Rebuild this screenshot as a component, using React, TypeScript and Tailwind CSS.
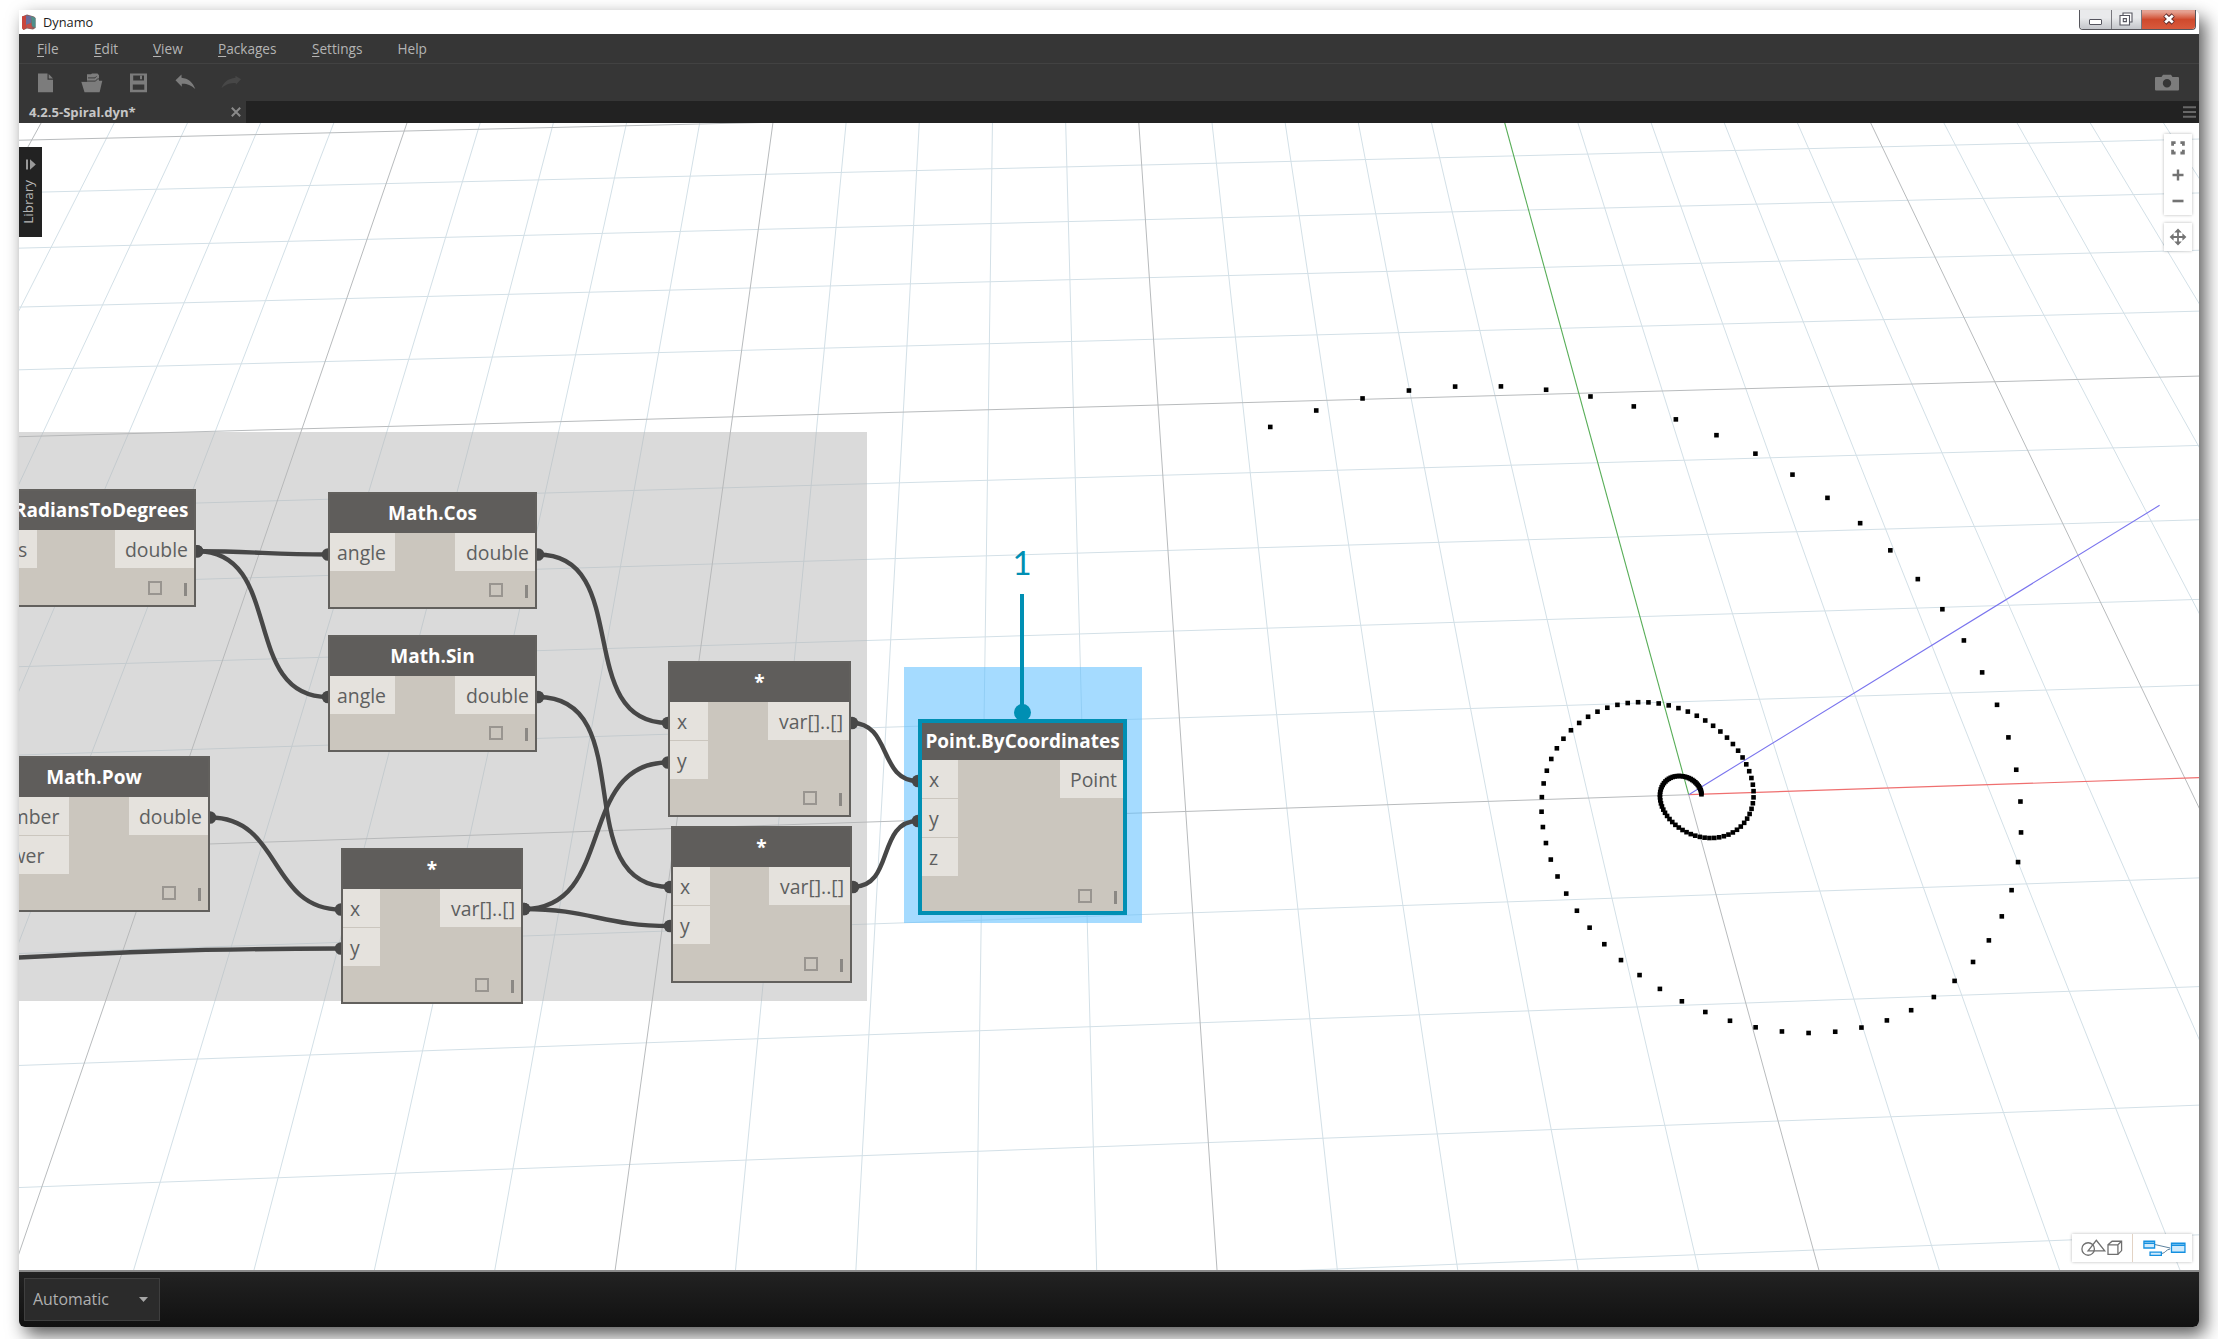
import React from "react";

/* ---------- 3D background: ground plane seen in perspective ---------- */

type Pt = [number, number];

// Projects a point of the ground plane to canvas pixels.
const project = (x: number, y: number): Pt => {
  const w = 1 + 0.001358 * x + 0.03917 * y;
  return [
    (1688.7 + 102.2 * x + 39.86 * y) / w,
    (794.7 - 2.249 * x - 64.87 * y) / w,
  ];
};

const segment = (a: Pt, b: Pt) =>
  `M${a[0].toFixed(1)} ${a[1].toFixed(1)}L${b[0].toFixed(1)} ${b[1].toFixed(1)}`;

const range = (from: number, to: number) =>
  Array.from({ length: to - from + 1 }, (_, i) => from + i);

const columns = range(-28, 20);
const rows = range(-5, 13);

const minorPath =
  columns.filter((k) => k % 5 !== 0).map((k) => segment(project(k, -6), project(k, 14))).join("") +
  rows.filter((k) => k % 5 !== 0).map((k) => segment(project(-30, k), project(20, k))).join("");

const majorPath =
  columns.filter((k) => k % 5 === 0 && k !== 0).map((k) => segment(project(k, -6), project(k, 14))).join("") +
  rows.filter((k) => k % 5 === 0 && k !== 0).map((k) => segment(project(-30, k), project(20, k))).join("") +
  segment(project(-30, 0), project(0, 0)) +
  segment(project(0, -6), project(0, 0));

// Logarithmic spiral sampled at a constant angular step.
const spiral = range(0, 148).map((i) => {
  const t = i * 0.10008;
  const r = 0.1275 * Math.exp(0.2593 * t);
  return project(r * Math.cos(t), r * Math.sin(t));
});

function Background() {
  return (
    <svg className="absolute inset-0 size-full" viewBox="19 123 2180 1147" fill="none">
      <path d={minorPath} stroke="#d3e0e7" strokeWidth="1" />
      <path d={majorPath} stroke="#b8bbbd" strokeWidth="1" />
      <path d={segment(project(0, 0), project(0, 14))} stroke="#57ad57" strokeWidth="1.1" />
      <path d={segment(project(0, 0), project(20, 0))} stroke="#ef6f6f" strokeWidth="1.2" />
      <path d="M1688.7 794.7L2159.6 505.3" stroke="#7a74ee" strokeWidth="1.1" />
      {spiral.map(([x, y], i) => (
        <rect key={i} x={x - 2.3} y={y - 2.3} width="4.6" height="4.6" fill="#000" />
      ))}
    </svg>
  );
}

/* ---------- Wires ---------- */

const wires: [number, number, number, number][] = [
  [197, 551.3, 328, 554.5],
  [197, 551.3, 328, 697],
  [538, 554.5, 668, 723],
  [538, 697, 670, 887],
  [524, 909, 668, 762.5],
  [524, 909, 670, 926],
  [210, 817.5, 341, 909.5],
  [852, 723, 918, 781],
  [853, 887, 918, 821],
];

function Wires() {
  return (
    <svg className="absolute inset-0 size-full" viewBox="19 123 2180 1147" fill="none">
      <g stroke="#474747" strokeWidth="4.4">
        {wires.map(([x1, y1, x2, y2], i) => {
          const c = Math.hypot(x2 - x1, y2 - y1) * 0.45;
          return (
            <path key={i} d={`M${x1} ${y1}C${x1 + c} ${y1} ${x2 - c} ${y2} ${x2} ${y2}`} />
          );
        })}
        <path d="M10 958C120 952 190 949 341 948.5" />
      </g>
      <g fill="#474747">
        {wires.map(([x1, y1, x2, y2], i) => (
          <React.Fragment key={i}>
            <circle cx={x1} cy={y1} r="6.3" />
            <circle cx={x2} cy={y2} r="6.3" />
          </React.Fragment>
        ))}
        <circle cx="341" cy="948.5" r="6.3" />
      </g>
    </svg>
  );
}

/* ---------- Nodes ---------- */

type NodeProps = {
  title: string;
  inputs: string[];
  output: string;
  box: string;
  inWidth: string;
  outWidth: string;
  selected?: boolean;
};

function GraphNode({ title, inputs, output, box, inWidth, outWidth, selected }: NodeProps) {
  return (
    <div
      className={`absolute flex flex-col bg-[#cbc6be] ${box} ${
        selected ? "border-4 border-[#008fb3]" : "border-2 border-[#62605d]"
      }`}
    >
      <div
        className={`flex shrink-0 items-center justify-center whitespace-nowrap bg-[#5f5d5b] text-[19px] font-bold text-white ${
          selected ? "h-[37px] pb-px" : "h-[39px]"
        }`}
      >
        {title}
      </div>
      <div className="flex items-start justify-between text-[19.4px] leading-[40px] text-[#5e5f60]">
        <div className={`flex flex-col gap-px ${inWidth}`}>
          {inputs.map((name) => (
            <div key={name} className="h-[38px] bg-[#e5e2dd] pl-[7px]">
              {name}
            </div>
          ))}
        </div>
        <div className={`h-[38px] bg-[#e5e2dd] pr-[6px] text-right ${outWidth}`}>{output}</div>
      </div>
      <div
        className={`mt-auto flex items-end justify-end gap-[22px] ${
          selected ? "mr-[6px] mb-[7px]" : "mr-[7px] mb-[9px]"
        }`}
      >
        <span className="mb-px size-[14px] border-2 border-[#999590]" />
        <span className="h-[13px] w-[3px] bg-[#8b8884]" />
      </div>
    </div>
  );
}

const nodes: NodeProps[] = [
  { title: "Math.RadiansToDegrees", inputs: ["radians"], output: "double", box: "left-[-68px] top-[366px] w-[245px] h-[118px]", inWidth: "w-[84px]", outWidth: "w-[79px]" },
  { title: "Math.Cos", inputs: ["angle"], output: "double", box: "left-[309px] top-[369px] w-[209px] h-[117px]", inWidth: "w-[65px]", outWidth: "w-[80px]" },
  { title: "Math.Sin", inputs: ["angle"], output: "double", box: "left-[309px] top-[512px] w-[209px] h-[117px]", inWidth: "w-[65px]", outWidth: "w-[80px]" },
  { title: "Math.Pow", inputs: ["number", "power"], output: "double", box: "left-[-41px] top-[633px] w-[232px] h-[156px]", inWidth: "w-[89px]", outWidth: "w-[79px]" },
  { title: "*", inputs: ["x", "y"], output: "var[]..[]", box: "left-[322px] top-[725px] w-[182px] h-[156px]", inWidth: "w-[37px]", outWidth: "w-[81px]" },
  { title: "*", inputs: ["x", "y"], output: "var[]..[]", box: "left-[649px] top-[538px] w-[183px] h-[156px]", inWidth: "w-[38px]", outWidth: "w-[81px]" },
  { title: "*", inputs: ["x", "y"], output: "var[]..[]", box: "left-[652px] top-[703px] w-[181px] h-[157px]", inWidth: "w-[37px]", outWidth: "w-[81px]" },
  { title: "Point.ByCoordinates", inputs: ["x", "y", "z"], output: "Point", box: "left-[899px] top-[596px] w-[209px] h-[196px]", inWidth: "w-[36px]", outWidth: "w-[63px]", selected: true },
];

function Callout() {
  return (
    <div className="absolute left-[983px] top-[417px] flex w-10 flex-col items-center text-[#008fb3]">
      <div className="h-[54px] font-['Lato'] text-[33px] leading-[44px]">1</div>
      <div className="h-[118px] w-1 bg-[#008fb3]" />
      <div className="-mt-[8px] size-[17px] rounded-full bg-[#008fb3]" />
    </div>
  );
}

/* ---------- Canvas controls ---------- */

function ViewControls() {
  const panel = "flex w-7 flex-col items-center bg-white shadow-[0_0_3px_rgba(0,0,0,0.28)]";
  return (
    <div className="absolute right-[7px] top-[11px] flex flex-col gap-[8px] text-[#737373]">
      <div className={`${panel} h-[81px]`}>
        <svg className="size-7" viewBox="0 0 28 28" fill="none" stroke="currentColor" strokeWidth="2.8">
          <path d="M8.6 11.8V8.6H11.6M16.4 8.6H19.4V11.8M19.4 15.8V19H16.4M11.6 19H8.6V15.8" />
        </svg>
        <svg className="size-[26px]" viewBox="0 0 26 26" stroke="currentColor" strokeWidth="2.4">
          <path d="M13 7.5V18.5M7.5 13H18.5" />
        </svg>
        <svg className="size-[26px]" viewBox="0 0 26 26" stroke="currentColor" strokeWidth="2.6">
          <path d="M7.5 13H18.5" />
        </svg>
      </div>
      <div className={`${panel} h-7`}>
        <svg className="size-7" viewBox="0 0 28 28" stroke="currentColor" strokeWidth="1.8" fill="currentColor">
          <path d="M14 8V20M8 14H20" />
          <path stroke="none" d="M14 5.6l3.8 4h-7.6zM14 22.4l3.8-4h-7.6zM5.6 14l4-3.8v7.6zM22.4 14l-4-3.8v7.6z" />
        </svg>
      </div>
    </div>
  );
}

function ModeSwitch() {
  return (
    <div className="absolute bottom-2 right-[7px] flex h-[28px] w-[120px] bg-white shadow-[0_0_3px_rgba(0,0,0,0.28)]">
      <div className="flex-1 border-r border-[#e3d3c4]">
        <svg className="h-full w-full" viewBox="0 0 60 28" fill="none" stroke="#6f6f6f" strokeWidth="1.3">
          <circle cx="16.3" cy="15" r="6.3" />
          <path d="M24.5 6.2L33 17H16.2Z" />
          <path d="M36.3 10.8H46.3V20.4H36.3ZM36.3 10.8L40.4 7.2H50V16.6L46.3 20.4M46.3 10.8L50 7.2" />
        </svg>
      </div>
      <div className="flex-1">
        <svg className="h-full w-full" viewBox="0 0 60 28" fill="#cfeafc" stroke="#1490e0" strokeWidth="1.3">
          <path d="M22 10.5L37.5 14M29 19.6C33 19 33 15.6 37.5 15" fill="none" stroke="#5a7f9c" strokeWidth="1" />
          <path d="M11 7.2H21.8V14H11ZM11 9.2H21.8M17.2 18.2H28.6V21.4H17.2ZM38.8 9.2H52.4V18.3H38.8Z" />
          <path d="M38.8 11.2H52.4" strokeWidth="1.6" />
        </svg>
      </div>
    </div>
  );
}

/* ---------- Window chrome ---------- */

function TitleBar() {
  return (
    <div className="flex h-6 shrink-0 items-start justify-between rounded-tr-md bg-white">
      <div className="flex h-6 items-center pl-[2px]">
        <svg className="size-4" viewBox="0 0 16 16">
          <path d="M1 2.5L6 .5L13 2.5L14.5 4V14L12 15.5L6 14.5L2.5 16L1 14Z" fill="#8d5f5c" />
          <path d="M1 2.5L5 1.5V14L2.5 16L1 14Z" fill="#c9453c" />
          <path d="M5 1.5L10 2V9L5 11Z" fill="#6a6d9a" />
          <path d="M10 2L14.5 4V14L11 12Z" fill="#4f8f8b" />
          <path d="M5 11L10 9L11 14.5L6 14Z" fill="#c3504a" />
        </svg>
        <span className="pb-px pl-[6px] text-[12.8px] leading-6 text-[#1c1c1c]">Dynamo</span>
      </div>
      <div className="mr-[3px] flex h-5 overflow-hidden rounded-b border border-t-0 border-[#56565c]">
        <div className="flex w-8 items-end justify-center border-r border-[#77777d] bg-linear-to-b from-[#e9eaec] from-40% to-[#c3c5ca] pb-[4px]">
          <span className="h-[6px] w-[13px] rounded-[1px] border border-[#55555f] bg-white" />
        </div>
        <div className="flex w-[30px] items-center justify-center border-r border-[#77777d] bg-linear-to-b from-[#e9eaec] from-40% to-[#c3c5ca] pb-px pr-[2px]">
          <svg className="size-[14px]" viewBox="0 0 14 14" fill="#fff" stroke="#55555f" strokeWidth="1.1">
            <path d="M4 1H13V10H4Z" />
            <path d="M1 3.5H10.5V13H1Z" />
            <path d="M4.3 6.6H7.4V9.6H4.3Z" />
          </svg>
        </div>
        <div className="flex w-[53px] items-center justify-center bg-linear-to-b from-[#e5a090] from-10% via-[#cf4a2d] via-50% to-[#d8593c] pb-px">
          <svg className="h-3 w-[14px]" viewBox="0 0 14 12">
            <path d="M2.8 2L11.2 10M11.2 2L2.8 10" stroke="#5c2b2b" strokeWidth="4.6" />
            <path d="M3.2 2.4L10.8 9.6M10.8 2.4L3.2 9.6" stroke="#fff" strokeWidth="2.8" />
          </svg>
        </div>
      </div>
    </div>
  );
}

const menus: [string, string, string][] = [
  ["F", "ile", "w-[57px]"],
  ["E", "dit", "w-[59px]"],
  ["V", "iew", "w-[65px]"],
  ["P", "ackages", "w-[94px]"],
  ["S", "ettings", "w-[85.5px]"],
];

function MenuBar() {
  return (
    <div className="flex h-[30px] shrink-0 items-center border-b border-[#424242] bg-[#363636] pl-[18px] pt-[2px] text-[13.6px] text-[#b4b4b4]">
      {menus.map(([key, rest, width]) => (
        <span key={rest} className={width}>
          <span className="underline underline-offset-2">{key}</span>
          {rest}
        </span>
      ))}
      <span>Help</span>
    </div>
  );
}

function ToolBar() {
  return (
    <div className="flex h-[37px] shrink-0 items-center justify-between bg-[#363636] pl-[18px] pr-5 text-[#7c7c7c]">
      <svg className="h-6 w-[220px]" viewBox="37 70.7 220 24" fill="currentColor">
        <path d="M38 73.3H47.5V79.5H53V92H38Z" />
        <path d="M48.7 73.8L53 78.3H48.7Z" />
        <path d="M87 78.5V74H91L92 73.3H97.5L99 75V80.5H102.3L99.6 92H84.5L81.3 81.5H87Z" />
        <path d="M81.5 80.8H95.5L97.5 78.6H100M88 77.6H95L96.5 76" stroke="#363636" strokeWidth=".9" fill="none" />
        <path fillRule="evenodd" d="M130 73.3H147V92H130ZM133.2 75.3V80.3H144V75.3ZM132.8 84.3V89.5H144.3V84.3Z" />
        <path d="M140 75.3H142V79H140Z" />
        <path d="M175.5 80L181.5 74.2V77.4C188 78 193 82 195.3 88.8C190.5 84.5 187 83.2 181.8 83.4V86.5Z" />
        <path fill="#474747" d="M241 79L235.5 75.5V77.5C228 78.3 223.5 82 221.5 88C226 84 230 82.8 235.8 82.8V84.5Z" />
      </svg>
      <svg className="mb-px h-[17px] w-6" viewBox="0 0 24 17" fill="currentColor">
        <path fillRule="evenodd" d="M1 3H6.5L8 .7H16L17.5 3H23Q24 3 24 4V15.5Q24 16.5 23 16.5H1Q0 16.5 0 15.5V4Q0 3 1 3ZM12 5A4.2 4.2 0 1 0 12 13.4A4.2 4.2 0 1 0 12 5Z" />
      </svg>
    </div>
  );
}

function TabBar() {
  return (
    <div className="flex h-[22px] shrink-0 items-center justify-between bg-[#222222] pr-[3px]">
      <div className="flex h-full w-[227px] items-center justify-between bg-[#363636] pl-[10px] pr-[5px] text-[#c6c6c6]">
        <span className="pt-px text-[13.1px] font-bold">4.2.5-Spiral.dyn*</span>
        <svg className="size-[10px]" viewBox="0 0 10 10" stroke="#8a8a8a" strokeWidth="2">
          <path d="M.8 .8L9.2 9.2M9.2 .8L.8 9.2" />
        </svg>
      </div>
      <svg className="h-3 w-[13px]" viewBox="0 0 13 12" stroke="#686868" strokeWidth="2">
        <path d="M0 1.2H13M0 6H13M0 10.8H13" />
      </svg>
    </div>
  );
}

function LibraryTab() {
  return (
    <div className="absolute left-0 top-6 flex h-[90px] w-[23px] flex-col items-center bg-[#222222] pt-3 text-[#9a9a9a]">
      <svg className="h-[11px] w-[11px]" viewBox="0 0 11 11" fill="currentColor">
        <path d="M1 .5H3V10.5H1ZM5 .3L10.8 5.5L5 10.7Z" />
      </svg>
      <span className="mr-[4px] mt-[10px] rotate-180 text-[13.4px] font-medium leading-[23px] text-[#b6b6b6] [writing-mode:vertical-rl]">
        Library
      </span>
    </div>
  );
}

function BottomBar() {
  return (
    <div className="flex h-[57px] shrink-0 items-center rounded-b-[6px] border-t-2 border-[#8a8a8a] bg-linear-to-b from-[#222222] to-[#111111] pl-[5px]">
      <div className="flex h-[43px] w-[136px] items-center justify-between border border-[#3f3f3f] bg-[#2b2b2b] pl-2 pr-[11px] text-[15.9px] text-[#b0b0b0]">
        Automatic
        <svg className="mb-px h-[5px] w-[9px]" viewBox="0 0 9 5" fill="#a6a6a6">
          <path d="M0 0H9L4.5 5Z" />
        </svg>
      </div>
    </div>
  );
}

export default function App() {
  return (
    <div className="h-[1339px] w-[2218px] overflow-hidden bg-white pl-[19px] pt-[10px] font-['Open_Sans',sans-serif]">
      <div className="flex h-[1317px] w-[2180px] flex-col rounded-b-[6px] rounded-tr-md shadow-[6px_8px_18px_rgba(0,0,0,0.65)]">
        <TitleBar />
        <MenuBar />
        <ToolBar />
        <TabBar />
        <main className="relative min-h-0 flex-1 overflow-hidden bg-white">
          <Background />
          <div className="absolute left-0 top-[309px] h-[569px] w-[848px] bg-[#b6b6b6]/50" />
          <div className="absolute left-[885px] top-[544px] h-[256px] w-[238px] bg-[#63c1ff]/58" />
          <Wires />
          {nodes.map((node, i) => (
            <GraphNode key={i} {...node} />
          ))}
          <Callout />
          <LibraryTab />
          <ViewControls />
          <ModeSwitch />
        </main>
        <BottomBar />
      </div>
    </div>
  );
}
